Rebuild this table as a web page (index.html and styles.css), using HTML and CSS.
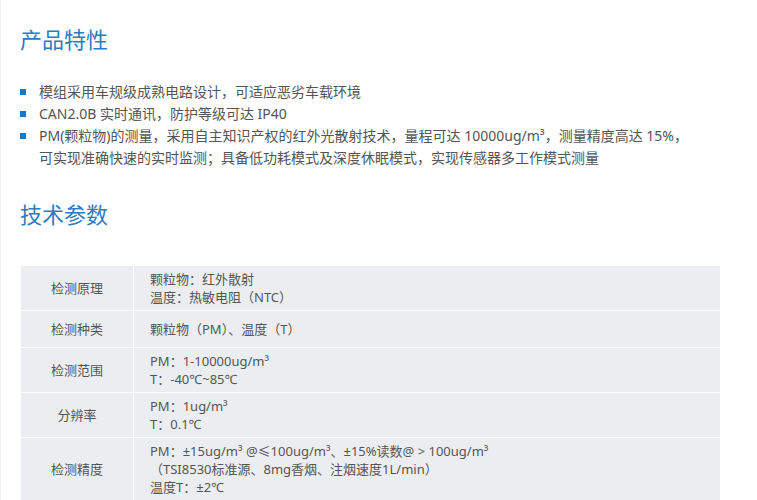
FILE: index.html
```
<!DOCTYPE html>
<html lang="zh-CN">
<head>
    <meta charset="UTF-8">
    <title>产品特性</title>
    <link rel="stylesheet" href="styles.css">
</head>
<body>
    <div class="page">
        <h2 class="title">产品特性</h2>
        <ul class="feature">
            <li>模组采用车规级成熟电路设计，可适应恶劣车载环境</li>
            <li>CAN2.0B 实时通讯，防护等级可达 IP40</li>
            <li>PM(颗粒物)的测量，采用自主知识产权的红外光散射技术，量程可达 10000ug/m³，测量精度高达 15%，可实现准确快速的实时监测；具备低功耗模式及深度休眠模式，实现传感器多工作模式测量</li>
        </ul>
        <h2 class="title title2">技术参数</h2>
        <table class="param">
            <tr>
                <td class="name">检测原理</td>
                <td>颗粒物：红外散射<br>温度：热敏电阻（NTC）</td>
            </tr>
            <tr class="r2">
                <td class="name">检测种类</td>
                <td>颗粒物（PM）、温度（T）</td>
            </tr>
            <tr>
                <td class="name">检测范围</td>
                <td>PM：1-10000ug/m³<br>T：-40℃~85℃</td>
            </tr>
            <tr>
                <td class="name">分辨率</td>
                <td>PM：1ug/m³<br>T：0.1℃</td>
            </tr>
            <tr>
                <td class="name">检测精度</td>
                <td>PM：±15ug/m³ @≤100ug/m³、±15%读数@ > 100ug/m³<br>（TSI8530标准源、8mg香烟、注烟速度1L/min）<br>温度T：±2℃</td>
            </tr>
        </table>
    </div>
</body>
</html>
```
FILE: styles.css
```
*{
    padding: 0;
    margin: 0;
}
body{
    font-family: "Noto Sans", "Noto Sans CJK SC", sans-serif;
    color: #555;
    background: #fff;
}
.page{
    padding: 23px 0 0 19px;
    border-left: 1px solid #f2f2f2;
}
.title{
    font-family: "Noto Sans CJK SC", sans-serif;
    font-size: 22px;
    font-weight: normal;
    line-height: 30px;
    color: #2a7cc4;
}
.title2{
    margin-top: 29px;
}
.feature{
    list-style: none;
    margin-top: 28px;
    width: 680px;
}
.feature li{
    position: relative;
    padding-left: 19px;
    font-size: 14px;
    line-height: 22px;
}
.feature li::before{
    content: "";
    position: absolute;
    left: 0;
    top: 8px;
    width: 6px;
    height: 6px;
    background: #1a78c2;
}
.param{
    margin-top: 38px;
    margin-left: 1px;
    width: 699px;
    border-collapse: collapse;
    font-size: 13px;
    line-height: 18px;
}
.param td{
    background: #ecedf1;
    border: 1px solid #fff;
    padding: 4px 16px 4px;
    height: 35px;
}
.param td.name{
    width: 80px;
    text-align: center;
}
.param tr:first-child td{
    border-top: none;
}
.param td:first-child{
    border-left: none;
}
.param td:last-child{
    border-right: none;
}
.param .r2 td{
    height: 28px;
}
```
